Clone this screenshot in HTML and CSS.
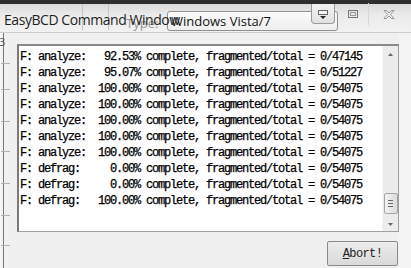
FILE: index.html
```html
<!DOCTYPE html>
<html>
<head>
<meta charset="utf-8">
<link rel="stylesheet" href="styles.css">
</head>
<body>
<div class="window">
  <div class="topband"></div>
  <div class="titlebar">
    <div class="title-wrap">
      <span class="title">EasyBCD Command Window</span>
      <span class="ghost">Type:</span>
    </div>
    <div class="combo">
      <span class="combo-text">Windows Vista/7</span>
      <div class="combo-btn">
        <svg width="14" height="12" viewBox="0 0 14 12"><rect x="2.5" y="1.5" width="9" height="4" fill="#f4f4f4" stroke="#666"/><path d="M4 7h6l-3 3z" fill="#222"/></svg>
      </div>
    </div>
    <div class="ctrl max">
      <svg width="12" height="10" viewBox="0 0 12 10"><rect x="1.5" y="1.5" width="9" height="7" fill="none" stroke="#777"/><rect x="3.5" y="3.5" width="5" height="3" fill="none" stroke="#999"/></svg>
    </div>
    <div class="ctrl close">
      <svg width="14" height="11" viewBox="0 0 14 11"><path d="M2 1.5h2.5L7 4l2.5-2.5H12L8.3 5.5 12 9.5H9.5L7 7 4.5 9.5H2l3.7-4z" fill="#f2f2f2" stroke="#888" stroke-width="0.9"/></svg>
    </div>
  </div>
  <div class="body">
    <div class="leftframe">
      <span class="frag f1">3</span>
      <span class="tick" style="top:30px"></span>
      <span class="tick" style="top:56px"></span>
      <span class="tick" style="top:88px"></span>
      <span class="tick" style="top:118px"></span>
      <span class="tick" style="top:150px"></span>
      <span class="tick" style="top:182px"></span>
      <span class="tick" style="top:212px"></span>
    </div>
    <div class="main">
      <div class="log">
<pre class="lines">F: analyze:   92.53% complete, fragmented/total = 0/47145
F: analyze:   95.07% complete, fragmented/total = 0/51227
F: analyze:  100.00% complete, fragmented/total = 0/54075
F: analyze:  100.00% complete, fragmented/total = 0/54075
F: analyze:  100.00% complete, fragmented/total = 0/54075
F: analyze:  100.00% complete, fragmented/total = 0/54075
F: analyze:  100.00% complete, fragmented/total = 0/54075
F: defrag:     0.00% complete, fragmented/total = 0/54075
F: defrag:     0.00% complete, fragmented/total = 0/54075
F: defrag:   100.00% complete, fragmented/total = 0/54075</pre>
        <div class="scroll">
          <svg class="arrow" width="7" height="5" viewBox="0 0 7 5"><path d="M3.5 1L6 4H1z" fill="#666"/></svg>
          <div class="track"></div>
          <div class="thumb"><span></span><span></span><span></span></div>
          <svg class="arrow" width="7" height="5" viewBox="0 0 7 5"><path d="M1 1h5L3.5 4z" fill="#666"/></svg>
        </div>
      </div>
      <div class="actions">
        <button class="abort"><u>A</u>bort!</button>
      </div>
    </div>
    <div class="rightframe"></div>
  </div>
</div>
</body>
</html>
```
FILE: styles.css
```css
html, body {
  margin: 0;
  padding: 0;
}
body {
  width: 411px;
  height: 268px;
  overflow: hidden;
  background: #f0f0f0;
  font-family: "Open Sans", "Noto Sans", sans-serif;
}
.window {
  display: flex;
  flex-direction: column;
  height: 268px;
}
.topband {
  height: 4px;
  background: #2e2e2e;
}
.titlebar {
  height: 29px;
  display: flex;
  align-items: flex-start;
  background: linear-gradient(#dadada, #ebebeb 40%, #f2f2f2);
  border-bottom: 1px solid #cdcdcd;
  box-sizing: border-box;
}
.title-wrap {
  position: relative;
  width: 167px;
  height: 28px;
  flex: none;
  padding: 4px 0 0 4px;
  box-sizing: border-box;
}
.title-wrap::before,
.title-wrap::after {
  content: "";
  position: absolute;
  top: 0;
  height: 26px;
  width: 1px;
  background: #c4c4c4;
}
.title-wrap::before { left: 82px; }
.title-wrap::after { left: 108px; }
.title {
  position: relative;
  z-index: 1;
  font-size: 14px;
  color: #1e1e1e;
  letter-spacing: -0.45px;
  white-space: nowrap;
}
.ghost {
  position: absolute;
  left: 126px;
  top: 10px;
  font-size: 13px;
  color: #707070;
  opacity: 0.7;
}
.combo {
  position: relative;
  width: 171px;
  height: 20px;
  margin-top: 7px;
  border: 1px solid #8f8f8f;
  border-radius: 3px;
  background: linear-gradient(#fbfbfb, #eeeeee);
  display: flex;
  align-items: center;
  padding-left: 3px;
  box-sizing: border-box;
  flex: none;
}
.combo-text {
  font-size: 13px;
  color: #111;
  white-space: nowrap;
}
.combo-btn {
  position: absolute;
  right: 2px;
  top: -8px;
  width: 24px;
  height: 20px;
  border: 1px solid #9a9a9a;
  border-top: 0;
  border-radius: 0 0 4px 4px;
  background: linear-gradient(#f2f2f2, #e2e2e2);
  display: flex;
  justify-content: center;
  align-items: flex-end;
  padding-bottom: 2px;
  box-sizing: border-box;
}
.ctrl {
  display: flex;
  justify-content: center;
  flex: none;
}
.max {
  width: 31px;
  height: 22px;
  align-items: center;
  border-right: 1px solid #d6d6d6;
  box-sizing: border-box;
  margin-top: -1px;
}
.close {
  width: 40px;
  height: 22px;
  align-items: center;
  margin-top: -1px;
}
.body {
  flex: 1;
  display: flex;
  background: #f0f0f0;
}
.leftframe {
  position: relative;
  width: 12px;
  flex: none;
  border-left: 1px solid #fafafa;
  box-sizing: border-box;
}
.leftframe::before {
  content: "";
  position: absolute;
  left: 2px;
  top: 0;
  bottom: 0;
  width: 1px;
  background: #7c7c7c;
}
.tick {
  position: absolute;
  left: 0;
  width: 9px;
  height: 1px;
  background: #b0b0b0;
}
.frag {
  position: absolute;
  font-size: 11px;
  color: #555;
}
.f1 {
  left: -2px;
  top: 1px;
}
.main {
  flex: 1;
  display: flex;
  flex-direction: column;
  padding: 11px 0 0 5px;
}
.log {
  height: 188px;
  display: flex;
  background: #ffffff;
  border: 1px solid #a0a0a0;
  border-left: 2px solid #7a7a7a;
  border-top: 2px solid #8a8a8a;
  box-sizing: border-box;
}
.lines {
  flex: 1;
  margin: 0;
  padding: 3px 0 0 1px;
  font-family: "Liberation Mono", monospace;
  font-size: 12px;
  letter-spacing: -1.2px;
  line-height: 16px;
  color: #000;
  white-space: pre;
  overflow: hidden;
  -webkit-text-stroke: 0.25px #000;
}
.scroll {
  width: 16px;
  flex: none;
  background: #ececec;
  border-left: 1px solid #f4f4f4;
  display: flex;
  flex-direction: column;
  align-items: center;
  padding: 6px 0 4px;
  box-sizing: border-box;
}
.track {
  flex: 1;
}
.thumb {
  width: 14px;
  height: 21px;
  border: 1px solid #a5a5a5;
  border-radius: 2px;
  background: linear-gradient(90deg, #f2f2f2, #dcdcdc);
  display: flex;
  flex-direction: column;
  align-items: center;
  justify-content: center;
  gap: 2px;
  box-sizing: border-box;
  margin-bottom: 8px;
}
.thumb span {
  width: 5px;
  height: 1px;
  background: #666;
}
.actions {
  display: flex;
  justify-content: flex-end;
  padding: 9px 1px 0 0;
}
.abort {
  width: 71px;
  height: 25px;
  border: 1px solid #8a8a8a;
  border-radius: 2px;
  background: linear-gradient(#ececec, #d9d9d9);
  font-family: "Liberation Mono", monospace;
  font-size: 12px;
  letter-spacing: -0.6px;
  color: #222;
  padding: 0;
}
.rightframe {
  width: 12px;
  flex: none;
  background: #f3f3f3;
}
```
